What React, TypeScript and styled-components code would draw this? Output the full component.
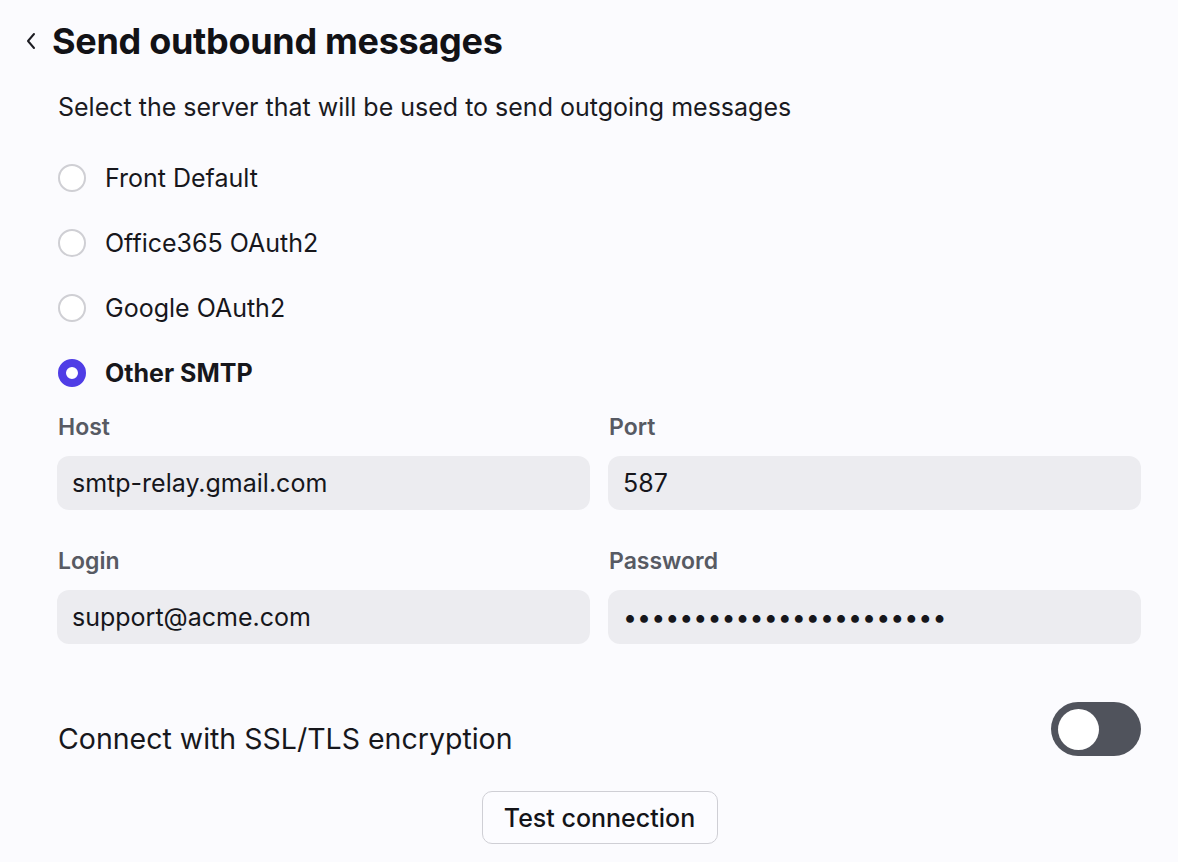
import React, { useState } from "react";
import styled, { createGlobalStyle } from "styled-components";

const Global = createGlobalStyle`
  html, body { margin: 0; padding: 0; background: #fbfbfe; }
  body { font-family: Inter, "Noto Sans", sans-serif; color: #141418; }
  * { box-sizing: border-box; }
`;

const Page = styled.div`
  width: 1178px;
  height: 862px;
  padding: 20px 37px 0 22px;
  display: flex;
  flex-direction: column;
  overflow: hidden;
`;

const Header = styled.div`
  display: flex;
  align-items: center;
  gap: 12px;
  height: 42px;
`;

const BackButton = styled.button`
  border: 0;
  background: none;
  padding: 0;
  width: 18px;
  height: 24px;
  display: flex;
  align-items: center;
  justify-content: center;
  color: #1c1c22;
  cursor: pointer;
`;

const Title = styled.h1`
  margin: 0;
  font-size: 36px;
  font-weight: 700;
  letter-spacing: -0.3px;
  color: #121216;
`;

const Body = styled.div`
  padding-left: 36px;
  display: flex;
  flex-direction: column;
`;

const Subtitle = styled.p`
  margin: 30px 0 0;
  font-size: 25px;
  line-height: 30px;
  color: #1a1a1f;
`;

const RadioList = styled.div`
  display: flex;
  flex-direction: column;
  margin-top: 42px;
  gap: 37px;
`;

const RadioRow = styled.label`
  display: flex;
  align-items: center;
  gap: 19px;
  height: 28px;
  cursor: pointer;
`;

const RadioCircle = styled.span<{ $checked: boolean }>`
  width: 28px;
  height: 28px;
  border-radius: 50%;
  flex-shrink: 0;
  border: ${(p) => (p.$checked ? "8px solid #4f3de6" : "2px solid #cfcfd4")};
  background: #ffffff;
`;

const RadioText = styled.span<{ $checked: boolean }>`
  font-size: 25px;
  font-weight: ${(p) => (p.$checked ? 700 : 400)};
  color: #17171c;
`;

const FieldGrid = styled.div`
  display: grid;
  grid-template-columns: 1fr 1fr;
  column-gap: 18px;
  row-gap: 37px;
  margin-top: 26px;
  margin-left: -1px;
`;

const Field = styled.div`
  display: flex;
  flex-direction: column;
  gap: 15px;
`;

const FieldLabel = styled.span`
  font-size: 23px;
  font-weight: 600;
  color: #575a63;
  line-height: 28px;
  padding-left: 1px;
`;

const Input = styled.input`
  height: 54px;
  border: 0;
  border-radius: 12px;
  background: #ececf0;
  padding: 0 15px;
  font-family: Inter, "Noto Sans", sans-serif;
  font-size: 25px;
  color: #16161b;
  outline: none;
`;

const ToggleRow = styled.div`
  display: flex;
  align-items: center;
  justify-content: space-between;
  margin-top: 58px;
`;

const ToggleText = styled.span`
  font-size: 28.5px;
  color: #17171c;
  padding-top: 19px;
`;

const Switch = styled.button<{ $on: boolean }>`
  width: 90px;
  height: 54px;
  border-radius: 27px;
  border: 0;
  padding: 0 7px;
  background: ${(p) => (p.$on ? "#4f3de6" : "#50535c")};
  display: flex;
  align-items: center;
  justify-content: ${(p) => (p.$on ? "flex-end" : "flex-start")};
  cursor: pointer;
`;

const Knob = styled.span`
  width: 41px;
  height: 41px;
  border-radius: 50%;
  background: #ffffff;
`;

const ButtonRow = styled.div`
  display: flex;
  justify-content: center;
  margin-top: 35px;
`;

const TestButton = styled.button`
  width: 236px;
  height: 53px;
  border: 1px solid #cfcfd5;
  border-radius: 10px;
  background: #fcfcff;
  font-family: Inter, "Noto Sans", sans-serif;
  font-size: 25px;
  font-weight: 500;
  color: #141418;
  cursor: pointer;
`;

const options = ["Front Default", "Office365 OAuth2", "Google OAuth2", "Other SMTP"];

export default function App() {
  const [selected, setSelected] = useState("Other SMTP");
  const [ssl, setSsl] = useState(false);
  return (
    <>
      <Global />
      <Page>
        <Header>
          <BackButton aria-label="Back">
            <svg width="14" height="20" viewBox="0 0 14 20" fill="none">
              <path d="M10 3 L4 10 L10 17" stroke="currentColor" strokeWidth="2" strokeLinecap="round" strokeLinejoin="round" />
            </svg>
          </BackButton>
          <Title>Send outbound messages</Title>
        </Header>
        <Body>
          <Subtitle>Select the server that will be used to send outgoing messages</Subtitle>
          <RadioList>
            {options.map((o) => (
              <RadioRow key={o} onClick={() => setSelected(o)}>
                <RadioCircle $checked={selected === o} />
                <RadioText $checked={selected === o}>{o}</RadioText>
              </RadioRow>
            ))}
          </RadioList>
          <FieldGrid>
            <Field>
              <FieldLabel>Host</FieldLabel>
              <Input defaultValue="smtp-relay.gmail.com" />
            </Field>
            <Field>
              <FieldLabel>Port</FieldLabel>
              <Input defaultValue="587" />
            </Field>
            <Field>
              <FieldLabel>Login</FieldLabel>
              <Input defaultValue="support@acme.com" />
            </Field>
            <Field>
              <FieldLabel>Password</FieldLabel>
              <Input type="password" defaultValue="abcdefghijklmnopqrstuvw" />
            </Field>
          </FieldGrid>
          <ToggleRow>
            <ToggleText>Connect with SSL/TLS encryption</ToggleText>
            <Switch $on={ssl} onClick={() => setSsl(!ssl)} aria-label="SSL">
              <Knob />
            </Switch>
          </ToggleRow>
          <ButtonRow>
            <TestButton>Test connection</TestButton>
          </ButtonRow>
        </Body>
      </Page>
    </>
  );
}
